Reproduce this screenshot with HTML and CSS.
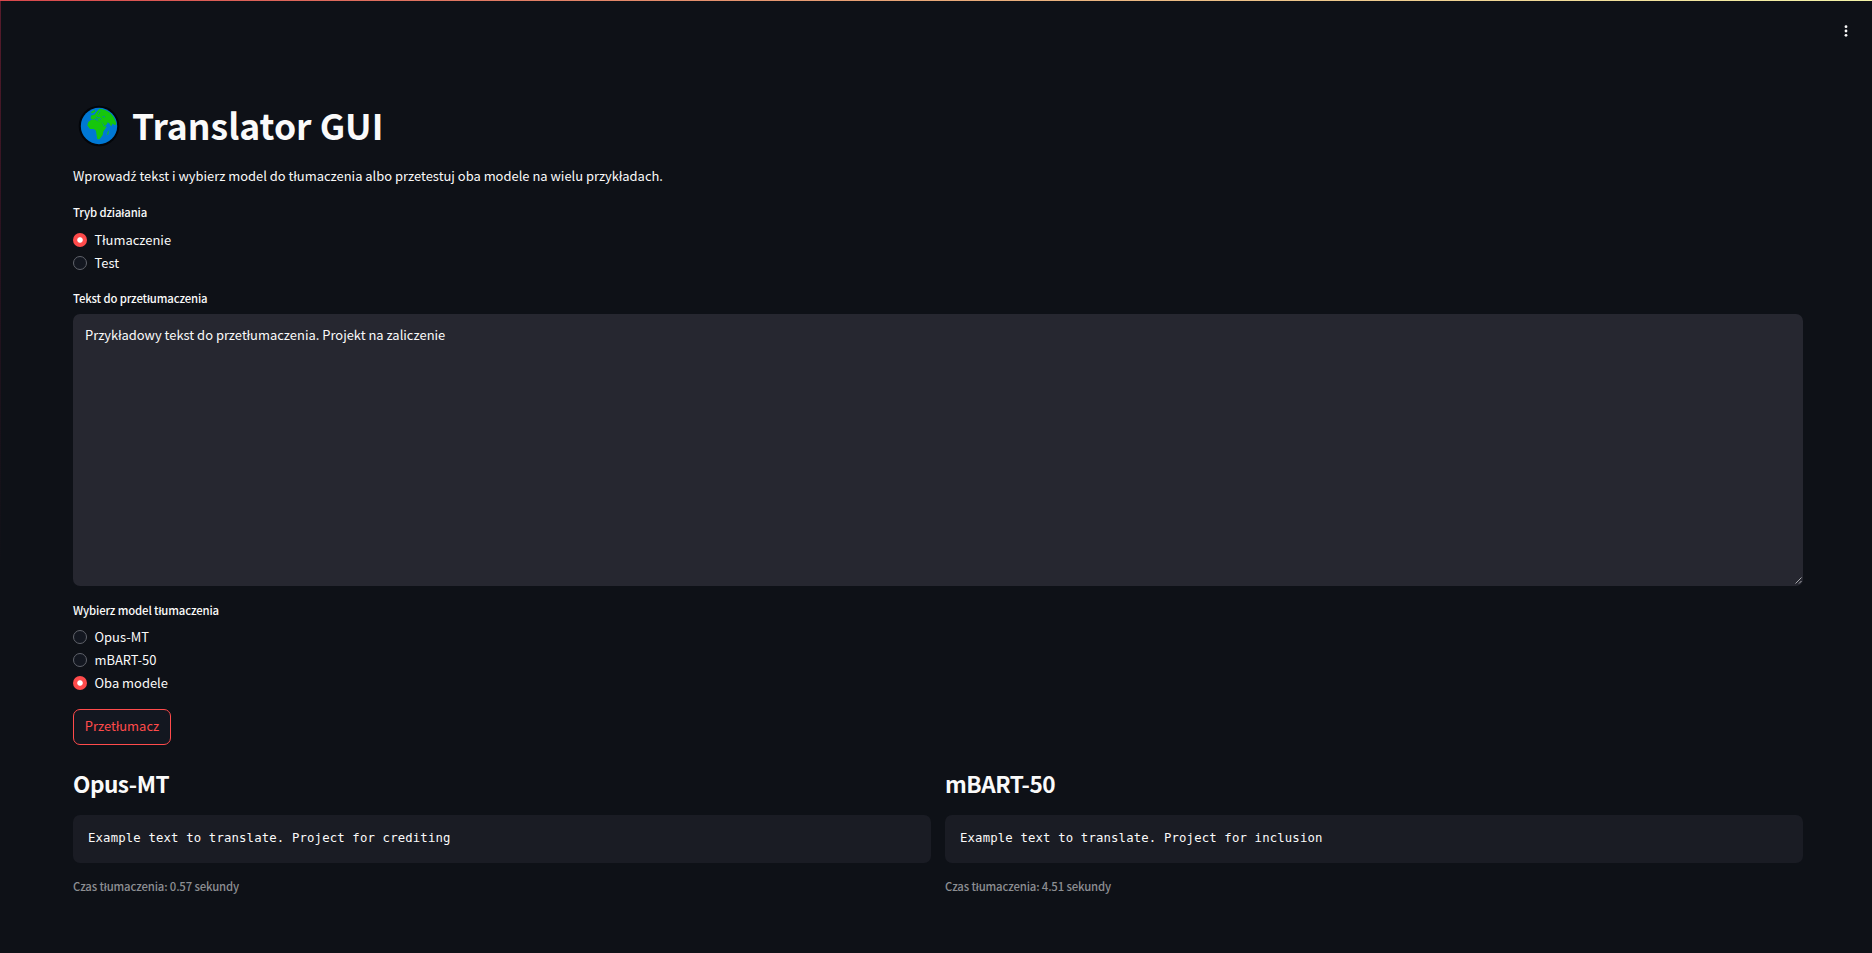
FILE: index.html
```html
<!DOCTYPE html>
<html lang="pl">
<head>
<meta charset="utf-8">
<title>Translator GUI</title>
<link rel="stylesheet" href="styles.css">
</head>
<body>
<div class="app">
  <div class="decoration"></div>
  <header class="toolbar">
    <svg class="kebab" viewBox="0 0 4 12" width="4" height="12"><circle cx="2" cy="1.7" r="1.4"/><circle cx="2" cy="6" r="1.4"/><circle cx="2" cy="10.3" r="1.4"/></svg>
  </header>
  <main class="content">
    <h1 class="title">
      <svg class="globe" viewBox="0 0 42 42" width="42" height="42">
        <circle cx="21" cy="21" r="20.3" fill="#030509"/>
        <circle cx="21" cy="21" r="18.2" fill="#0078d4"/>
        <path fill="#16c60c" d="M10.3 17l3-2.2 5-.3.6 1.4 4.6.6 2.5 4.9h2.9l-3.6 5.2-.6 3.4-3.2 4.3h-2.2l-1.4-8.6-2-1.8H12l-2.7-3.6zM12.6 13.6l.4-3 3.4-.8 2-2.8 3-3.2 3 .4c7.500 1.800 13 7.500 14 15.400l-2 .4-1.600-1.600-1.800 3-1.800-3.400-2-.4 0 1.400-2.600 2.200-3-4.800-4.400-.6.4-1.800-2-.6-2.200 1zM12.600 7.200l4-2.400.6 1.600-3 2.200zM29.600 27l1.200-1.800-.4 4-1.200.8z"/>
        <path fill="none" stroke="#0078d4" stroke-width=".8" d="M18 11.500l2 1.500 1.500-.5 1.500 2M22 6l-2 3.500M24.500 11.500l2.500.500"/>
      </svg>
      <span class="title-text">Translator GUI</span>
    </h1>
    <p class="intro">Wprowad<span class="ext">ź</span> tekst i wybierz model do tłumaczenia albo przetestuj oba modele na wielu przykładach.</p>
    <div class="label mode-label">Tryb działania</div>
    <div class="radios mode-radios">
      <label class="radio"><i class="dot on"></i><span>Tłumaczenie</span></label>
      <label class="radio"><i class="dot"></i><span>Test</span></label>
    </div>
    <div class="label text-label">Tekst do przetłumaczenia</div>
    <div class="textarea">Przykładowy tekst do przetłumaczenia. Projekt na zaliczenie
      <svg class="grip" viewBox="0 0 7 7" width="7" height="7"><path d="M.5 6.500l6-6M4 6.500L6.500 4"/></svg>
    </div>
    <div class="label model-label">Wybierz model tłumaczenia</div>
    <div class="radios model-radios">
      <label class="radio"><i class="dot"></i><span>Opus-MT</span></label>
      <label class="radio"><i class="dot"></i><span>mBART-50</span></label>
      <label class="radio"><i class="dot on"></i><span>Oba modele</span></label>
    </div>
    <button class="submit">Przetłumacz</button>
    <div class="columns">
      <section>
        <h3 class="heading">Opus-MT</h3>
        <pre class="code">Example text to translate. Project for crediting</pre>
        <p class="caption">Czas tłumaczenia: 0.57 sekundy</p>
      </section>
      <section>
        <h3 class="heading">mBART-50</h3>
        <pre class="code">Example text to translate. Project for inclusion</pre>
        <p class="caption">Czas tłumaczenia: 4.51 sekundy</p>
      </section>
    </div>
  </main>
</div>
</body>
</html>
```
FILE: styles.css
```css
* { box-sizing: border-box; margin: 0; padding: 0; }
body { background: #0e1117; color: #fafafa; font: 400 12.95px/23px "Noto Sans CJK JP", "Noto Sans", sans-serif; }
.app { height: 953px; overflow: hidden; background: linear-gradient(#5a1c2c, #2a1320 25%, #0e1117 60%) 0 0 / 1px 100% no-repeat; }
.decoration { height: 1px; background: linear-gradient(90deg, #d8484c, #e8a878 50%, #f4f4a8); }
.toolbar { height: 98px; display: flex; justify-content: flex-end; padding: 24px 24px 0 0; }
.kebab { fill: #fafafa; }
.content { padding: 0 69px 0 73px; }
.title { display: flex; align-items: center; height: 52px; font-size: 35.5px; line-height: 52px; font-weight: 700; padding-left: 5px; gap: 12px; }
.globe { margin-top: 2px; }
.intro { margin-top: 13px; height: 23px; white-space: nowrap; }
.ext { font-family: "Open Sans", "Noto Sans", sans-serif; font-size: 12.6px; line-height: 1; }
.label { font-size: 11.35px; line-height: 20px; height: 20px; font-weight: 500; letter-spacing: -.14px; }
.mode-label { margin-top: 15px; }
.mode-radios { margin-top: 7px; }
.model-radios { margin-top: 6px; }
.radio { display: flex; align-items: flex-start; gap: 7.500px; height: 23px; }
.radio span { margin-top: -1px; }
.dot { width: 14px; height: 14px; margin-top: 4px; border-radius: 50%; border: 1px solid #60636b; background: #131720; }
.dot.on { border: 0; background: radial-gradient(circle, #fff 2.3px, #ff4b4b 3.200px); }
.text-label { margin-top: 13px; }
.textarea { position: relative; margin-top: 6px; height: 272px; border-radius: 7px; background: #262730; padding: 9px 12px; }
.grip { position: absolute; right: 1px; bottom: 2px; stroke: #a8a9ad; stroke-width: 1; fill: none; }
.model-label { margin-top: 14px; }
.submit { display: block; margin-top: 14px; width: 98px; height: 36px; padding-bottom: 3px; border: 1px solid #ff4b4b; border-radius: 7px; background: #131720; color: #ff4b4b; font: inherit; text-align: center; white-space: nowrap; }
.columns { display: grid; grid-template-columns: 1fr 1fr; gap: 14px; margin-top: 23px; }
.heading { font-size: 22.6px; line-height: 32px; height: 32px; font-weight: 600; letter-spacing: -.5px; }
.code { margin-top: 15px; height: 48px; border-radius: 7px; background: #1a1c24; padding: 12px 15px; font: 12.3px/23px "DejaVu Sans Mono", monospace; letter-spacing: .15px; }
.caption { margin-top: 13px; font-size: 11.35px; line-height: 20px; font-weight: 500; letter-spacing: -.15px; color: #8c8e92; }
```
